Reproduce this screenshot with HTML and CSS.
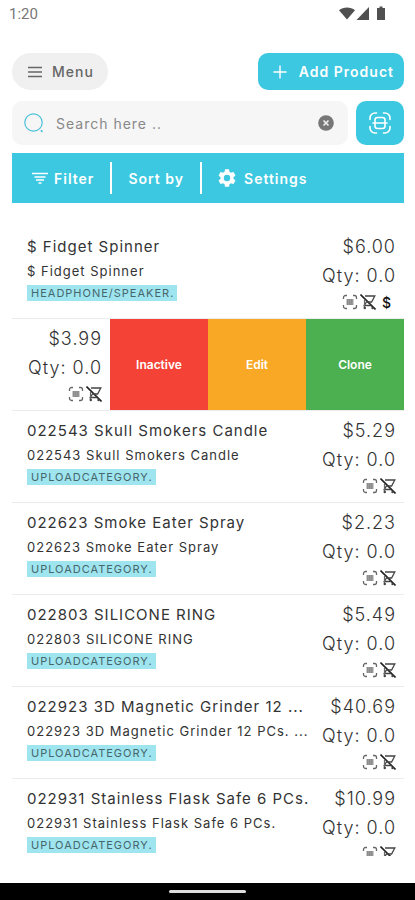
FILE: index.html
```
<!DOCTYPE html>
<html lang="en">
<head>
  <meta charset="UTF-8">
  <title>Products</title>
  <meta name="viewport" content="width=device-width, initial-scale=1.0">
  <link rel="stylesheet" href="styles.css">
</head>
<body>

  <!-- shared icons -->
  <svg class="sprite" aria-hidden="true">
    <symbol id="scan" viewBox="0 0 16 16">
      <path d="M1.5 5V3.5a2 2 0 0 1 2-2H5M11 1.5h1.5a2 2 0 0 1 2 2V5M14.5 11v1.5a2 2 0 0 1-2 2H11M5 14.5H3.5a2 2 0 0 1-2-2V11" fill="none" stroke="#666" stroke-width="1.3"/>
      <rect x="4.5" y="5" width="7" height="6" fill="#999"/>
      <path d="M5.5 5v6M7.5 5v6M9.5 5v6" stroke="#888" stroke-width=".8"/>
    </symbol>
    <symbol id="no-cart" viewBox="0 0 16 16">
      <path d="M.5.5l15 15" stroke="#222" stroke-width="1.6"/>
      <path d="M5 2h9.8l-3.2 6H6.5L4.2 11.5H11" fill="none" stroke="#444" stroke-width="1.3"/>
      <path d="M4.5 6v9" stroke="#666" stroke-width="1.2"/>
      <circle cx="4.8" cy="14" r="1.2" fill="#444"/>
      <circle cx="12.5" cy="14" r="1.2" fill="#444"/>
    </symbol>
  </svg>

  <div class="status-bar">
    <span>1:20</span>
    <svg width="48" height="16" viewBox="0 0 48 16" fill="#505050">
      <path d="M0 4.2C4.5.6 11.5.6 16 4.2L8 13.5z"/>
      <path d="M30 1v13H17.5z"/>
      <path d="M40.5.5h3V2H46v12h-8V2h2.5z"/>
    </svg>
  </div>

  <main>
    <div class="top-row">
      <button class="menu-btn">
        <svg width="14" height="12" viewBox="0 0 14 12" stroke="#666" stroke-width="1.3"><path d="M0 1.5h14M0 6h14M0 10.5h14"/></svg>
        Menu
      </button>
      <button class="add-btn">
        <svg width="14" height="14" viewBox="0 0 14 14" stroke="#fff" stroke-width="1.4"><path d="M7 .5v13M.5 7h13"/></svg>
        Add Product
      </button>
    </div>

    <div class="search-row">
      <div class="search-box">
        <svg width="20" height="20" viewBox="0 0 20 20" fill="none" stroke="#4bbfda" stroke-width="1.2"><circle cx="9.5" cy="9.5" r="8.7"/><path d="M16.8 17.2l1.7 1.7" stroke-width="1.6"/></svg>
        <input type="text" placeholder="Search here .." aria-label="Search">
        <button class="clear-btn" aria-label="Clear">
          <svg width="16" height="16" viewBox="0 0 16 16"><circle cx="8" cy="8" r="7.8" fill="#777"/><path d="M5.5 5.5l5 5M10.5 5.5l-5 5" stroke="#eee" stroke-width="1.7"/></svg>
        </button>
      </div>
      <button class="scan-btn" aria-label="Scan barcode">
        <svg width="24" height="24" viewBox="0 0 24 24" fill="none" stroke="#fff" stroke-width="1.6" stroke-linecap="round"><path d="M2 8.5V7a5 5 0 0 1 5-5h1.5M15.5 2H17a5 5 0 0 1 5 5v1.5M22 15.5V17a5 5 0 0 1-5 5h-1.5M8.5 22H7a5 5 0 0 1-5-5v-1.5"/><rect x="7" y="6.5" width="10" height="11" rx="2.5"/><path d="M5 12h14"/></svg>
      </button>
    </div>

    <div class="toolbar">
      <button>
        <svg width="16" height="12" viewBox="0 0 16 12" stroke="#fff" stroke-width="1.6"><path d="M0 1.5h16M2.5 5h11M4 8h8M6.5 11h3"/></svg>
        Filter
      </button>
      <button>Sort by</button>
      <button class="settings">
        <svg width="18" height="18" viewBox="2 2 20 20" fill="#fff"><path d="M19.14 12.94c.04-.3.06-.61.06-.94s-.02-.64-.07-.94l2.03-1.58a.49.49 0 0 0 .12-.61l-1.92-3.32a.49.49 0 0 0-.59-.22l-2.39.96a7 7 0 0 0-1.62-.94l-.36-2.54A.48.48 0 0 0 13.92 2.4h-3.84a.48.48 0 0 0-.48.41l-.36 2.54a7 7 0 0 0-1.62.94l-2.39-.96a.48.48 0 0 0-.59.22L2.74 8.87a.48.48 0 0 0 .12.61l2.03 1.58a7 7 0 0 0 0 1.88l-2.03 1.58a.49.49 0 0 0-.12.61l1.92 3.32c.12.22.37.29.59.22l2.39-.96c.5.38 1.03.7 1.62.94l.36 2.54c.05.24.24.41.48.41h3.84c.24 0 .44-.17.48-.41l.36-2.54a7 7 0 0 0 1.62-.94l2.39.96c.22.08.47 0 .59-.22l1.92-3.32a.48.48 0 0 0-.12-.61zM12 15.6a3.6 3.6 0 1 1 0-7.2 3.6 3.6 0 0 1 0 7.2z"/></svg>
        Settings
      </button>
    </div>

    <div class="products">
      <div class="product">
        <div class="info">
          <div class="name">$ Fidget Spinner</div>
          <div class="desc">$ Fidget Spinner</div>
          <span class="tag">HEADPHONE/SPEAKER.</span>
        </div>
        <div class="stock">
          <div class="price">$6.00</div>
          <div class="qty">Qty: 0.0</div>
          <div class="flags"><svg><use href="#scan"/></svg><svg><use href="#no-cart"/></svg><span>$</span></div>
        </div>
      </div>

      <div class="product swiped">
        <div class="stock">
          <div class="price">$3.99</div>
          <div class="qty">Qty: 0.0</div>
          <div class="flags"><svg><use href="#scan"/></svg><svg><use href="#no-cart"/></svg></div>
        </div>
        <button class="action inactive">Inactive</button>
        <button class="action edit">Edit</button>
        <button class="action clone">Clone</button>
      </div>

      <div class="product">
        <div class="info">
          <div class="name">022543 Skull Smokers Candle</div>
          <div class="desc">022543 Skull Smokers Candle</div>
          <span class="tag">UPLOADCATEGORY.</span>
        </div>
        <div class="stock">
          <div class="price">$5.29</div>
          <div class="qty">Qty: 0.0</div>
          <div class="flags"><svg><use href="#scan"/></svg><svg><use href="#no-cart"/></svg></div>
        </div>
      </div>

      <div class="product">
        <div class="info">
          <div class="name">022623 Smoke Eater Spray</div>
          <div class="desc">022623 Smoke Eater Spray</div>
          <span class="tag">UPLOADCATEGORY.</span>
        </div>
        <div class="stock">
          <div class="price">$2.23</div>
          <div class="qty">Qty: 0.0</div>
          <div class="flags"><svg><use href="#scan"/></svg><svg><use href="#no-cart"/></svg></div>
        </div>
      </div>

      <div class="product">
        <div class="info">
          <div class="name">022803 SILICONE RING</div>
          <div class="desc">022803 SILICONE RING</div>
          <span class="tag">UPLOADCATEGORY.</span>
        </div>
        <div class="stock">
          <div class="price">$5.49</div>
          <div class="qty">Qty: 0.0</div>
          <div class="flags"><svg><use href="#scan"/></svg><svg><use href="#no-cart"/></svg></div>
        </div>
      </div>

      <div class="product">
        <div class="info">
          <div class="name">022923 3D Magnetic Grinder 12 ...</div>
          <div class="desc">022923 3D Magnetic Grinder 12 PCs. ...</div>
          <span class="tag">UPLOADCATEGORY.</span>
        </div>
        <div class="stock">
          <div class="price">$40.69</div>
          <div class="qty">Qty: 0.0</div>
          <div class="flags"><svg><use href="#scan"/></svg><svg><use href="#no-cart"/></svg></div>
        </div>
      </div>

      <div class="product">
        <div class="info">
          <div class="name">022931 Stainless Flask Safe 6 PCs.</div>
          <div class="desc">022931 Stainless Flask Safe 6 PCs.</div>
          <span class="tag">UPLOADCATEGORY.</span>
        </div>
        <div class="stock">
          <div class="price">$10.99</div>
          <div class="qty">Qty: 0.0</div>
          <div class="flags"><svg><use href="#scan"/></svg><svg><use href="#no-cart"/></svg></div>
        </div>
      </div>
    </div>
  </main>

  <div class="nav-bar"><span></span></div>

</body>
</html>
```

FILE: styles.css
```
:root {
  --accent: #3cc8e0;
  --tag: #9ee5ef;
  --line: #ececec;
  --text: #333;
}

* {
  box-sizing: border-box;
}

body {
  margin: 0;
  height: 100vh;
  display: flex;
  flex-direction: column;
  background: #fff;
  color: var(--text);
  font-family: Inter, "Liberation Sans", sans-serif;
  letter-spacing: 1px;
}

button {
  border: 0;
  padding: 0;
  background: none;
  color: #fff;
  font: inherit;
  letter-spacing: inherit;
  white-space: nowrap;
  display: flex;
  align-items: center;
  cursor: pointer;
}

svg {
  display: block;
  flex: none;
}

.sprite {
  position: absolute;
  width: 0;
  height: 0;
}

.status-bar {
  display: flex;
  justify-content: space-between;
  align-items: center;
  height: 28px;
  padding: 0 28px 0 9px;
  color: #777;
  font-family: Roboto, sans-serif;
  font-size: 15px;
  letter-spacing: normal;
}

main {
  flex: 1;
  min-height: 0;
  display: flex;
  flex-direction: column;
  padding: 25px 11px 27px 12px;
}

.top-row {
  display: flex;
  justify-content: space-between;
  margin-bottom: 11px;
}

.menu-btn {
  height: 37px;
  gap: 10px;
  padding: 0 14px 0 16px;
  border-radius: 19px;
  background: #f0f0f0;
  color: #666;
  font-size: 14px;
  font-weight: 500;
}

.add-btn {
  height: 37px;
  gap: 12px;
  padding: 0 10px 0 15px;
  border-radius: 10px;
  background: var(--accent);
  font-size: 14px;
  font-weight: 600;
}

.search-row {
  display: flex;
  gap: 8px;
  margin-bottom: 8px;
}

.search-box {
  flex: 1;
  min-width: 0;
  height: 44px;
  display: flex;
  align-items: center;
  gap: 12px;
  padding: 0 14px 0 12px;
  border-radius: 10px;
  background: #f6f6f6;
}

.search-box input {
  flex: 1;
  min-width: 0;
  border: 0;
  padding: 0;
  outline: 0;
  background: none;
  font: inherit;
  font-size: 14px;
  letter-spacing: inherit;
}

.search-box input::placeholder {
  color: #888;
}

.scan-btn {
  width: 48px;
  height: 44px;
  justify-content: center;
  border-radius: 10px;
  background: var(--accent);
}

.toolbar {
  display: flex;
  align-items: center;
  height: 50px;
  padding: 0 4px;
  margin-bottom: 24px;
  background: var(--accent);
}

.toolbar button {
  height: 32px;
  gap: 6px;
  padding: 0 16px;
  font-size: 14px;
  font-weight: 600;
}

.toolbar button + button {
  border-left: 2px solid #fff;
}

.toolbar .settings {
  gap: 8px;
}

.products {
  flex: 1;
  min-height: 0;
  overflow: hidden;
}

.product {
  display: flex;
  justify-content: space-between;
  height: 92px;
  padding: 0 8px 0 15px;
  border-bottom: 1px solid var(--line);
}

.info {
  padding-top: 10px;
  white-space: nowrap;
}

.name {
  font-size: 15px;
  line-height: 20px;
  margin-bottom: 5px;
}

.desc {
  font-size: 13px;
  line-height: 18px;
  margin-bottom: 5px;
}

.tag {
  display: inline-block;
  padding: 0 3px 0 4px;
  background: var(--tag);
  color: #47666c;
  font-size: 11px;
  line-height: 16px;
  vertical-align: top;
}

.stock {
  padding-top: 8px;
  color: #333;
  font-size: 18px;
  font-weight: 300;
  text-align: right;
  white-space: nowrap;
}

.price,
.qty {
  line-height: 24px;
}

.price {
  margin-bottom: 5px;
}

.flags {
  display: flex;
  justify-content: flex-end;
  align-items: center;
  gap: 2px;
  height: 16px;
  margin-top: 6px;
}

.flags svg {
  width: 16px;
  height: 16px;
}

.flags span {
  padding: 0 4px;
  color: #111;
  font-size: 14px;
  font-weight: 500;
}

.swiped {
  padding: 0;
}

.swiped .stock {
  flex: 1;
  padding-right: 8px;
}

.action {
  width: 25%;
  justify-content: center;
  font-size: 12px;
  font-weight: 600;
  letter-spacing: normal;
}

.inactive {
  background: #f44336;
}

.edit {
  background: #f9a825;
}

.clone {
  background: #4caf50;
}

.nav-bar {
  display: flex;
  justify-content: center;
  align-items: center;
  height: 17px;
  background: #000;
}

.nav-bar span {
  width: 77px;
  height: 3px;
  border-radius: 2px;
  background: #ddd;
}
```
